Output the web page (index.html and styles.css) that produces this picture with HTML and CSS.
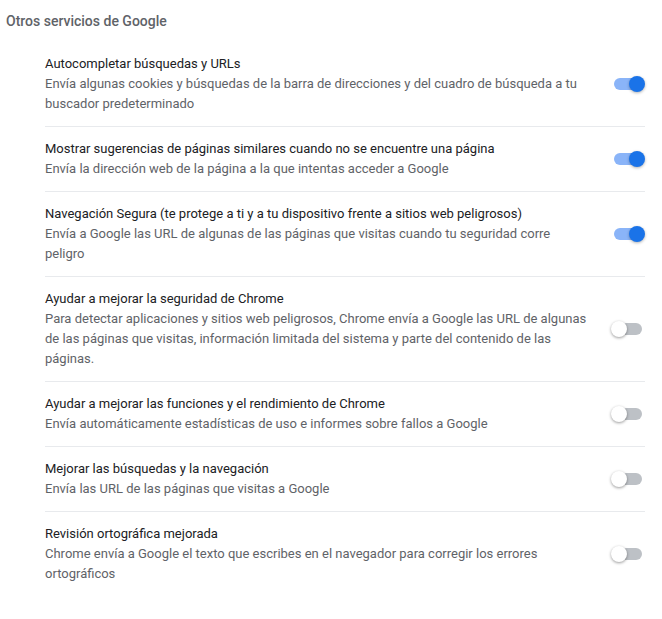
FILE: index.html
```html
<!DOCTYPE html>
<html lang="es">
<head>
<meta charset="utf-8">
<link rel="stylesheet" href="styles.css">
</head>
<body>
<div class="section-title">Otros servicios de Google</div>
<div class="list">
  <div class="row">
    <div class="text">
      <div class="label">Autocompletar búsquedas y URLs</div>
      <div class="sub">Envía algunas cookies y búsquedas de la barra de direcciones y del cuadro de búsqueda a tu buscador predeterminado</div>
    </div>
    <div class="toggle on"><span class="bar"></span><span class="knob"></span></div>
  </div>
  <div class="row">
    <div class="text">
      <div class="label">Mostrar sugerencias de páginas similares cuando no se encuentre una página</div>
      <div class="sub">Envía la dirección web de la página a la que intentas acceder a Google</div>
    </div>
    <div class="toggle on"><span class="bar"></span><span class="knob"></span></div>
  </div>
  <div class="row">
    <div class="text">
      <div class="label">Navegación Segura (te protege a ti y a tu dispositivo frente a sitios web peligrosos)</div>
      <div class="sub">Envía a Google las URL de algunas de las páginas que visitas cuando tu seguridad corre peligro</div>
    </div>
    <div class="toggle on"><span class="bar"></span><span class="knob"></span></div>
  </div>
  <div class="row">
    <div class="text">
      <div class="label">Ayudar a mejorar la seguridad de Chrome</div>
      <div class="sub">Para detectar aplicaciones y sitios web peligrosos, Chrome envía a Google las URL de algunas de las páginas que visitas, información limitada del sistema y parte del contenido de las páginas.</div>
    </div>
    <div class="toggle"><span class="bar"></span><span class="knob"></span></div>
  </div>
  <div class="row">
    <div class="text">
      <div class="label">Ayudar a mejorar las funciones y el rendimiento de Chrome</div>
      <div class="sub">Envía automáticamente estadísticas de uso e informes sobre fallos a Google</div>
    </div>
    <div class="toggle"><span class="bar"></span><span class="knob"></span></div>
  </div>
  <div class="row">
    <div class="text">
      <div class="label">Mejorar las búsquedas y la navegación</div>
      <div class="sub">Envía las URL de las páginas que visitas a Google</div>
    </div>
    <div class="toggle"><span class="bar"></span><span class="knob"></span></div>
  </div>
  <div class="row">
    <div class="text">
      <div class="label">Revisión ortográfica mejorada</div>
      <div class="sub">Chrome envía a Google el texto que escribes en el navegador para corregir los errores ortográficos</div>
    </div>
    <div class="toggle"><span class="bar"></span><span class="knob"></span></div>
  </div>
</div>
</body>
</html>
```
FILE: styles.css
```css
html, body {
  margin: 0;
  padding: 0;
  background: #ffffff;
}
body {
  font-family: Roboto, "Liberation Sans", sans-serif;
  font-size: 13px;
  line-height: 20px;
  color: #202124;
}
.section-title {
  padding: 11px 6px 11px;
  font-size: 14px;
  font-weight: 500;
  line-height: 20px;
  color: #5f6368;
}
.list {
  margin-left: 45px;
  width: 600px;
}
.row {
  display: flex;
  align-items: center;
  padding: 12px 0;
  min-height: 40px;
}
.row + .row {
  border-top: 1px solid #e8eaed;
}
.text {
  flex: 1;
  min-width: 0;
}
.label {
  color: #202124;
}
.sub {
  color: #5f6368;
}
.toggle {
  position: relative;
  flex: none;
  width: 34px;
  height: 16px;
  margin-left: 20px;
}
.bar {
  position: absolute;
  left: 3px;
  right: 3px;
  top: 2px;
  height: 12px;
  border-radius: 6px;
  background: #bdc1c6;
}
.knob {
  position: absolute;
  top: 0;
  left: 0;
  width: 16px;
  height: 16px;
  border-radius: 50%;
  background: #ffffff;
  box-shadow: 0 1px 3px rgba(0, 0, 0, 0.4);
}
.toggle.on .bar {
  background: #8ab4f8;
}
.toggle.on .knob {
  left: auto;
  right: 0;
  background: #1a73e8;
  box-shadow: 0 1px 3px rgba(0, 0, 0, 0.3);
}
```
